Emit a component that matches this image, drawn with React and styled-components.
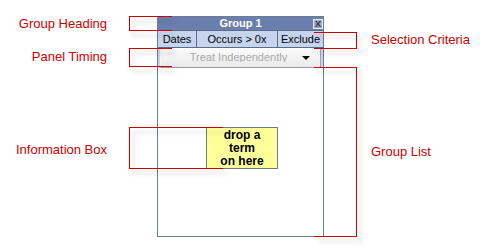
import React from "react";
import styled, { createGlobalStyle } from "styled-components";

const GlobalStyle = createGlobalStyle`
  html, body {
    margin: 0;
    padding: 0;
    background: #ffffff;
    font-family: "Liberation Sans", Arial, sans-serif;
  }
`;

const App = () => {
  return (
    <Page>
      <GlobalStyle />
      <LeftLabels>
        <Label top={16}>Group Heading</Label>
        <Label top={18}>Panel Timing</Label>
        <Label top={78}>Information Box</Label>
      </LeftLabels>

      <Panel>
        <Header>
          <Title>Group 1</Title>
          <CloseBtn>X</CloseBtn>
        </Header>
        <Tabs>
          <Tab width={38}>Dates</Tab>
          <Tab width={80}>Occurs &gt; 0x</Tab>
          <Tab last>Exclude</Tab>
        </Tabs>
        <TimingRow>
          <Dropdown>
            <DropText>Treat Independently</DropText>
            <Arrow />
          </Dropdown>
        </TimingRow>
        <GroupBody>
          <DropBox>
            drop a<br />
            term<br />
            on here
          </DropBox>
        </GroupBody>
      </Panel>

      <RightLabels>
        <Label top={32}>Selection Criteria</Label>
        <Label top={97}>Group List</Label>
      </RightLabels>

      {/* callout brackets over the panel */}
      <Bracket style={{ left: 129, top: 16, width: 43, height: 15 }} />
      <Bracket style={{ left: 129, top: 48, width: 43, height: 19 }} />
      <Bracket style={{ left: 129, top: 127, width: 94, height: 42 }} />
      <Bracket right style={{ left: 314, top: 32, width: 43, height: 17 }} />
      <Bracket right style={{ left: 314, top: 67, width: 43, height: 170 }} />
    </Page>
  );
};

export default App;

const Page = styled.div`
  position: relative;
  width: 488px;
  height: 249px;
  display: flex;
  align-items: flex-start;
  overflow: hidden;
`;

const LeftLabels = styled.div`
  width: 107px;
  display: flex;
  flex-direction: column;
  align-items: flex-end;
`;

const RightLabels = styled.div`
  margin-left: 47px;
  display: flex;
  flex-direction: column;
  align-items: flex-start;
`;

const Label = styled.div`
  margin-top: ${(p) => p.top}px;
  font-size: 13px;
  line-height: 15px;
  color: #cc0000;
  white-space: nowrap;
`;

const Panel = styled.div`
  margin-left: 50px;
  margin-top: 16px;
  width: 165px;
  border: 1px solid #6c7c93;
  display: flex;
  flex-direction: column;
  background: #ffffff;
`;

const Header = styled.div`
  height: 13px;
  background: #6a7fae;
  border-bottom: 1px solid #5d6d86;
  position: relative;
  display: flex;
  justify-content: center;
  align-items: center;
`;

const Title = styled.span`
  color: #ffffff;
  font-weight: bold;
  font-size: 11px;
  line-height: 13px;
`;

const CloseBtn = styled.div`
  position: absolute;
  right: 0px;
  top: 2px;
  width: 8px;
  height: 8px;
  border: 1px solid #eef1f7;
  background: #9aa7c6;
  color: #2f3548;
  font-size: 9px;
  font-weight: bold;
  line-height: 8px;
  text-align: center;
`;

const Tabs = styled.div`
  display: flex;
  height: 16px;
  background: #c6d4ef;
  border-bottom: 1px solid #5d6d86;
`;

const Tab = styled.div`
  ${(p) => (p.width ? `width: ${p.width}px;` : "flex: 1;")}
  border-right: ${(p) => (p.last ? "none" : "1px solid #5d6d86")};
  font-size: 11px;
  line-height: 16px;
  color: #000000;
  text-align: center;
  white-space: nowrap;
`;

const TimingRow = styled.div`
  height: 20px;
  background: #c6d4ef;
  padding: 0 2px 0 2px;
  display: flex;
`;

const Dropdown = styled.div`
  flex: 1;
  display: flex;
  align-items: flex-start;
  border: 1px solid;
  border-color: #ffffff #a5a5a5 #9a9a9a #f4f4f4;
  background: linear-gradient(#fbfbfb, #e9e9e9);
`;

const DropText = styled.span`
  flex: 1;
  margin-top: 1px;
  height: 12px;
  overflow: hidden;
  font-size: 11px;
  line-height: 15px;
  color: #a9a9a9;
  text-align: center;
  padding-left: 14px;
`;

const Arrow = styled.span`
  margin: 7px 10px 0 0;
  width: 0;
  height: 0;
  border-left: 4px solid transparent;
  border-right: 4px solid transparent;
  border-top: 4px solid #000000;
`;

const GroupBody = styled.div`
  height: 168px;
  padding: 59px 0 0 48px;
  box-sizing: border-box;
`;

const DropBox = styled.div`
  width: 70px;
  height: 39px;
  padding-top: 1px;
  border: 1px solid #6b7b8c;
  background: #ffff99;
  font-size: 12px;
  font-weight: bold;
  line-height: 13px;
  text-align: center;
  color: #000000;
`;

const Bracket = styled.div`
  position: absolute;
  box-sizing: border-box;
  border: 1.5px solid #cc0000;
  ${(p) => (p.right ? "border-left: none;" : "border-right: none;")}
  filter: drop-shadow(4px 5px 2px rgba(0, 0, 0, 0.22));
  pointer-events: none;
`;
